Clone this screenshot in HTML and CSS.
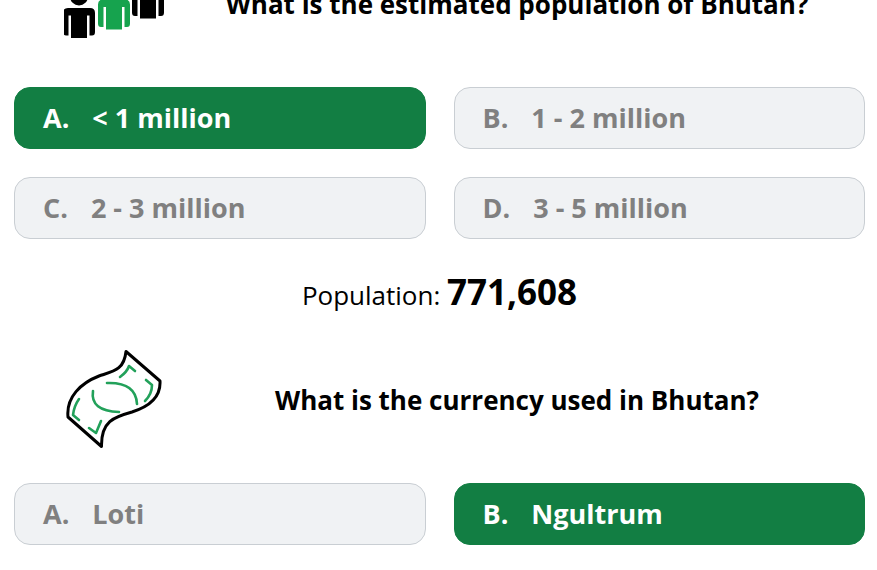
FILE: index.html
```html
<!DOCTYPE html>
<html lang="en">
<head>
<meta charset="utf-8">
<meta name="viewport" content="width=device-width, initial-scale=1">
<title>Bhutan quiz</title>
<link rel="stylesheet" href="styles.css">
</head>
<body>
<main class="quiz">
  <section class="block">
    <header class="question">
      <svg class="icon" viewBox="0 0 100 100" aria-hidden="true">
        <defs>
          <g id="person">
            <circle cx="16" cy="9" r="9"/>
            <path d="M5 20.500h22q5 0 5 5v19q0 3.500-3 3.500h-2.500V28h-2.500v22.500H8V28H5.500v20H3q-3 0-3-3.500v-19q0-5 5-5z"/>
          </g>
        </defs>
        <use href="#person" x="-1" y="33.500"/>
        <use href="#person" x="34" y="25" class="green"/>
        <use href="#person" x="68" y="14"/>
      </svg>
      <h2 class="title">What is the estimated population of Bhutan?</h2>
    </header>
    <div class="answers">
      <button type="button" class="answer correct"><span>A.</span><span>&lt; 1 million</span></button>
      <button type="button" class="answer"><span>B.</span><span>1 - 2 million</span></button>
      <button type="button" class="answer"><span>C.</span><span>2 - 3 million</span></button>
      <button type="button" class="answer"><span>D.</span><span>3 - 5 million</span></button>
    </div>
    <p class="fact">Population: <strong>771,608</strong></p>
  </section>
  <section class="block">
    <header class="question">
      <svg class="icon" viewBox="0 0 100 100" aria-hidden="true">
        <g class="line">
          <path d="M62 1.500L96 31C97 48 84 57 68 62C50 67 37 71 37.500 96.500L4 67C2 47 17 33 35 26C50 21 60 20 62 1.500z"/>
          <g class="green-line">
            <path d="M56 27Q63 22 65 16L71 21M82 30L88 35Q88 44 81 51M15 49Q10 56 9 65L15 70M25 78L32 83L37 71M43 33Q72 32 73 54M29 41Q26 61 55 62"/>
          </g>
        </g>
      </svg>
      <h2 class="title">What is the currency used in Bhutan?</h2>
    </header>
    <div class="answers">
      <button type="button" class="answer"><span>A.</span><span>Loti</span></button>
      <button type="button" class="answer correct"><span>B.</span><span>Ngultrum</span></button>
    </div>
  </section>
</main>
</body>
</html>
```
FILE: styles.css
```css
* {
  box-sizing: border-box;
}

html {
  overflow: hidden;
}

body {
  margin: 0;
  background: #fff;
  color: #000;
  font-family: "Open Sans", "Noto Sans", sans-serif;
  font-size: 27px;
  line-height: 36px;
}

/* The list is scrolled part way into the first question. */
.quiz {
  margin-top: -51px;
  padding: 0 12px 25px 14px;
}

.question {
  display: flex;
  align-items: center;
  height: 110px;
  margin-bottom: 28px;
  padding-left: 50px;
}

.icon {
  flex: none;
  width: 100px;
  height: 100px;
  margin-right: 5px;
}

.green {
  fill: #16a34e;
}

.line {
  fill: none;
  stroke: #000;
  stroke-width: 3;
  stroke-linecap: round;
  stroke-linejoin: round;
}

.green-line {
  stroke: #22a15a;
  stroke-width: 2.600;
}

.title {
  flex: 1;
  margin: 0;
  font-size: 26px;
  font-weight: 700;
  text-align: center;
}

.answers {
  display: grid;
  grid-template-columns: 1fr 1fr;
  gap: 28px;
}

.answer {
  display: flex;
  align-items: center;
  gap: 23px;
  min-height: 62px;
  padding: 12px 28px;
  border: 1px solid #c9ced3;
  border-radius: 16px;
  background: #f0f2f4;
  color: #808080;
  font: inherit;
  font-weight: 700;
  text-align: left;
}

.correct {
  border-color: #127e43;
  background: #127e43;
  color: #fff;
}

.fact {
  margin: 0;
  padding: 30px 0 27px;
  line-height: 46px;
  text-align: center;
  font-size: 26px;
  font-weight: 400;
}

.fact strong {
  font-size: 35px;
  font-weight: 700;
}
```
